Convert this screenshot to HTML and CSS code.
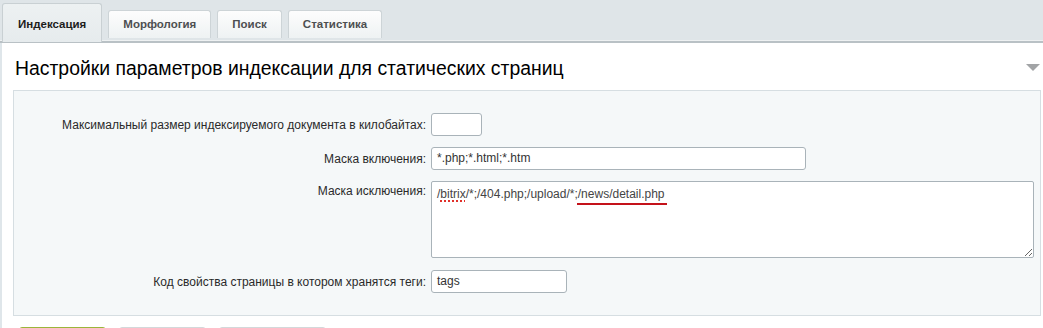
FILE: index.html
```html
<!DOCTYPE html>
<html lang="ru">
<head>
  <meta charset="UTF-8">
  <title>Настройки поиска</title>
  <link rel="stylesheet" href="styles.css">
</head>
<body>
  <div class="tabs">
    <div class="tab active">Индексация</div>
    <div class="tab">Морфология</div>
    <div class="tab">Поиск</div>
    <div class="tab">Статистика</div>
  </div>
  <div class="panel">
    <div class="section-head">
      <h2 class="section-title">Настройки параметров индексации для статических страниц</h2>
      <span class="toggle"></span>
    </div>
    <div class="form-box">
      <div class="form-grid">
        <label class="field-label">Максимальный размер индексируемого документа в килобайтах:</label>
        <div class="input input-small"></div>

        <label class="field-label">Маска включения:</label>
        <div class="input input-wide">*.php;*.html;*.htm</div>

        <label class="field-label label-top">Маска исключения:</label>
        <div class="textarea">/<span class="typo">bitrix</span>/*;/404.php;/upload/*<span class="marked">;/news/detail.php</span></div>

        <label class="field-label">Код свойства страницы в котором хранятся теги:</label>
        <div class="input input-mid">tags</div>
      </div>
    </div>
    <!-- кнопки формы, видна только верхняя кромка -->
    <div class="buttons">
      <button class="btn btn-save" title="Сохранить"></button>
      <button class="btn" title="Применить"></button>
      <button class="btn btn-wide" title="Отменить"></button>
    </div>
  </div>
</body>
</html>
```

FILE: styles.css
```css
html, body {
  margin: 0;
  height: 100%;
  overflow: hidden;
}
body {
  background: #fff;
  font-family: "Liberation Sans", Arial, sans-serif;
  color: #222;
}
.tabs {
  display: flex;
  align-items: flex-start;
  gap: 6px;
  height: 40px;
  padding-left: 2px;
  background: #dfe5e8;
  border-bottom: 1px solid #eef1f2;
  box-shadow: 0 2px 0 #b9c1c5;
  position: relative;
  z-index: 1;
}
.tab {
  box-sizing: border-box;
  margin-top: 10px;
  height: 28px;
  padding: 0 14px;
  line-height: 27px;
  font-size: 11.5px;
  font-weight: bold;
  color: #4d4f51;
  background: linear-gradient(#fdfdfd, #eef2f3);
  border: 1px solid #cdd4d7;
  border-bottom: none;
  border-radius: 3px 3px 0 0;
}
.tab.active {
  margin-top: 3px;
  height: 39px;
  line-height: 41px;
  padding: 0 15px;
  color: #1c1c1c;
  background: linear-gradient(#edf1f2, #e6ebed);
  border-color: #c9d0d3;
}
.panel {
  margin-top: 2px;
  border-left: 2px solid #dfe6ea;
  padding: 0 2px 0 11px;
  background: #fff;
}
.section-head {
  display: flex;
  align-items: center;
  justify-content: space-between;
  height: 47px;
  padding: 0 1px 0 2px;
}
.section-title {
  margin: 4px 0 0;
  font-size: 19.4px;
  font-weight: normal;
  color: #000;
}
.toggle {
  width: 0;
  height: 0;
  margin-top: 2px;
  border-left: 7px solid transparent;
  border-right: 7px solid transparent;
  border-top: 7px solid #a2a4a6;
}
.form-box {
  background: #f5f8f9;
  border: 1px solid #d6dee2;
  padding: 22px 0 22px;
}
.form-grid {
  display: grid;
  grid-template-columns: 412px 1fr;
  column-gap: 5px;
  row-gap: 11px;
  align-items: center;
}
.field-label {
  text-align: right;
  font-size: 12px;
  color: #2a2a2a;
}
.label-top {
  align-self: start;
  padding-top: 3px;
}
.input, .textarea {
  box-sizing: border-box;
  background: #fff;
  border: 1px solid #a9b3b9;
  border-radius: 3px;
  font-size: 12px;
  color: #333;
  padding: 0 5px;
}
.input {
  height: 23px;
  line-height: 21px;
}
.input-small { width: 51px; }
.input-wide { width: 375px; }
.input-mid { width: 136px; }
.textarea {
  width: 603px;
  height: 77px;
  margin-bottom: 1px;
  padding-top: 4px;
  line-height: 16px;
  color: #444;
  border-radius: 2px;
  overflow: auto;
  resize: both;
}
.typo {
  text-decoration: underline dotted #e0302a;
  text-decoration-thickness: 2px;
  text-underline-offset: 2px;
}
.marked {
  position: relative;
}
.marked::after {
  content: "";
  position: absolute;
  left: 3px;
  right: -2px;
  bottom: -4px;
  height: 2px;
  background: #c4121a;
}
.buttons {
  display: flex;
  gap: 13px;
  padding: 11px 0 0 6px;
}
.btn {
  height: 30px;
  width: 87px;
  border: 1px solid #d3d8da;
  border-radius: 3px;
  background: linear-gradient(#fff, #eceff0);
}
.btn-save {
  border-color: #9bb53a;
  background: linear-gradient(#bcd35d, #93b232);
}
.btn-wide { width: 107px; }
```
